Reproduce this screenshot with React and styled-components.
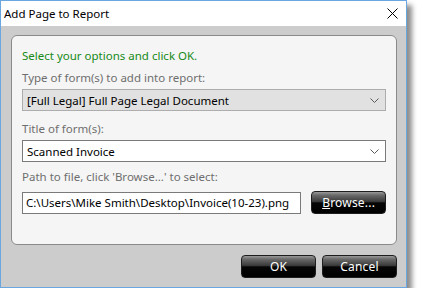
import React from "react";
import styled, { createGlobalStyle } from "styled-components";

const Global = createGlobalStyle`
  html, body { margin: 0; padding: 0; background: #ffffff; }
  body { font-family: "Noto Sans", "Open Sans", sans-serif; }
`;

const Window = styled.div`
  width: 407px;
  height: 288px;
  box-sizing: border-box;
  border: 1px solid #6aa6e0;
  display: flex;
  flex-direction: column;
  background: #cccccc;
  box-shadow: 5px 5px 5px rgba(0, 0, 0, 0.45);
`;

const TitleBar = styled.div`
  height: 25px;
  flex: none;
  background: #ffffff;
  display: flex;
  align-items: center;
  justify-content: space-between;
  padding: 0 8px 0 3px;
  font-size: 11.5px;
  color: #000;
`;

const CloseBtn = styled.svg`
  width: 11px;
  height: 11px;
  display: block;
`;

const Body = styled.div`
  flex: 1;
  display: flex;
  flex-direction: column;
  padding: 9px 9px 0 10px;
`;

const Panel = styled.div`
  height: 210px;
  box-sizing: border-box;
  border: 1px solid #8a8a8a;
  border-radius: 6px;
  background: #f5f5f5;
  padding: 12px 10px 0 10px;
  display: flex;
  flex-direction: column;
`;

const Text = styled.div`
  font-size: 11.5px;
  line-height: 16px;
  height: 16px;
  white-space: nowrap;
  color: ${(p) => (p.$green ? "#178a17" : "#6e6e6e")};
  margin-top: ${(p) => p.$mt || 0}px;
`;

const Select = styled.div`
  height: 22px;
  box-sizing: border-box;
  border: 1px solid ${(p) => (p.$grey ? "#adadad" : "#7a7a7a")};
  background: ${(p) => (p.$grey ? "#e1e1e1" : "#ffffff")};
  display: flex;
  align-items: center;
  justify-content: space-between;
  padding: 0 6px 0 4px;
  font-size: 11.5px;
  color: #000;
  margin-top: ${(p) => p.$mt || 0}px;
`;

const Chevron = styled.svg`
  width: 9px;
  height: 5px;
  display: block;
`;

const PathRow = styled.div`
  display: flex;
  gap: 10px;
  margin-top: 6px;
  align-items: center;
`;

const Input = styled.div`
  width: 280px;
  height: 22px;
  box-sizing: border-box;
  border: 1px solid #7a7a7a;
  background: #ffffff;
  display: flex;
  align-items: center;
  padding: 0 3px;
  font-size: 11.5px;
  color: #000;
  white-space: nowrap;
  overflow: hidden;
`;

const Button = styled.div`
  width: ${(p) => p.$w || 75}px;
  height: 23px;
  box-sizing: border-box;
  border: 1px solid #1e1e1e;
  border-radius: 4px;
  background: linear-gradient(
    to bottom,
    #9a9a9a 0%,
    #6a6a6a 15%,
    #3a3a3a 45%,
    #050505 52%,
    #000000 100%
  );
  color: #ffffff;
  font-size: 12px;
  display: flex;
  align-items: center;
  justify-content: center;
  letter-spacing: 0.2px;
`;

const U = styled.span`
  text-decoration: underline;
`;

const ButtonRow = styled.div`
  display: flex;
  justify-content: flex-end;
  gap: 6px;
  margin-top: 10px;
`;

const Down = () => (
  <Chevron viewBox="0 0 9 5">
    <polyline points="0.5,0.5 4.5,4.5 8.5,0.5" fill="none" stroke="#5a5a5a" strokeWidth="1" />
  </Chevron>
);

export default function App() {
  return (
    <>
      <Global />
      <Window>
        <TitleBar>
          <span>Add Page to Report</span>
          <CloseBtn viewBox="0 0 11 11">
            <line x1="0.5" y1="0.5" x2="10.5" y2="10.5" stroke="#000" strokeWidth="1" />
            <line x1="10.5" y1="0.5" x2="0.5" y2="10.5" stroke="#000" strokeWidth="1" />
          </CloseBtn>
        </TitleBar>
        <Body>
          <Panel>
            <Text $green>Select your options and click OK.</Text>
            <Text $mt={6}>Type of form(s) to add into report:</Text>
            <Select $grey $mt={3}>
              <span>[Full Legal] Full Page Legal Document</span>
              <Down />
            </Select>
            <Text $mt={10}>Title of form(s):</Text>
            <Select $mt={3}>
              <span>Scanned Invoice</span>
              <Down />
            </Select>
            <Text $mt={7}>Path to file, click 'Browse...' to select:</Text>
            <PathRow>
              <Input>C:\Users\Mike Smith\Desktop\Invoice(10-23).png</Input>
              <Button>
                <span>
                  <U>B</U>rowse...
                </span>
              </Button>
            </PathRow>
          </Panel>
          <ButtonRow>
            <Button $w={75}>OK</Button>
            <Button $w={75}>Cancel</Button>
          </ButtonRow>
        </Body>
      </Window>
    </>
  );
}
